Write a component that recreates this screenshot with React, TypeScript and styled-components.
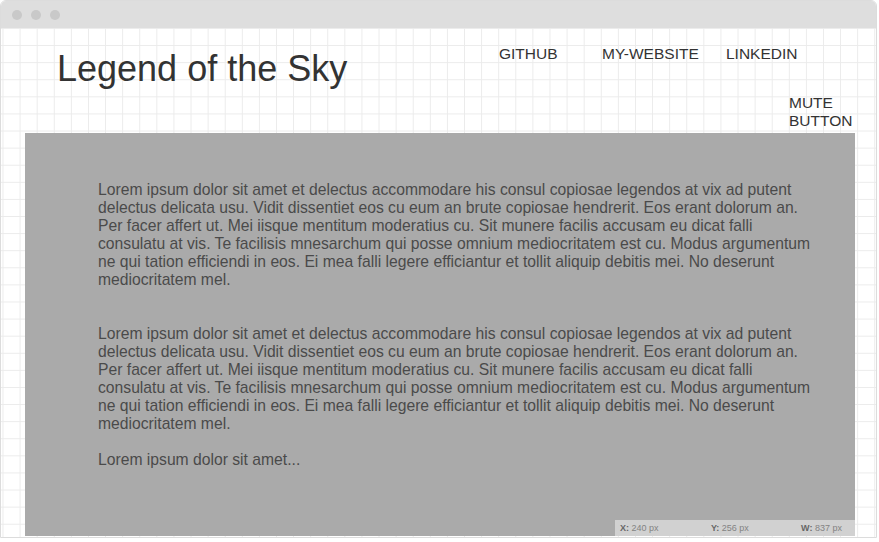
import React from 'react'
import styled, { createGlobalStyle } from 'styled-components'

const GlobalStyle = createGlobalStyle`
    html, body {
        margin: 0;
        padding: 0;
        background: #fff;
        font-family: "Liberation Sans", Arial, sans-serif;
    }
`

const lorem =
    'Lorem ipsum dolor sit amet et delectus accommodare his consul copiosae legendos at vix ad putent delectus delicata usu. Vidit dissentiet eos cu eum an brute copiosae hendrerit. Eos erant dolorum an. Per facer affert ut. Mei iisque mentitum moderatius cu. Sit munere facilis accusam eu dicat falli consulatu at vis. Te facilisis mnesarchum qui posse omnium mediocritatem est cu. Modus argumentum ne qui tation efficiendi in eos. Ei mea falli legere efficiantur et tollit aliquip debitis mei. No deserunt mediocritatem mel.'

const links = [
    { label: 'GITHUB', width: 103 },
    { label: 'MY-WEBSITE', width: 124 },
    { label: 'LINKEDIN', width: 0 },
]

const stats = [
    { key: 'X:', value: '240 px' },
    { key: 'Y:', value: '256 px' },
    { key: 'W:', value: '837 px' },
]

const App: React.FC = () => {
    return (
        <>
            <GlobalStyle />
            <Window>
                <TitleBar>
                    <Dot />
                    <Dot />
                    <Dot />
                </TitleBar>
                <Canvas>
                    <Header>
                        <Title>Legend of the Sky</Title>
                        <Nav>
                            <Links>
                                {links.map((l) => (
                                    <NavLink key={l.label} $width={l.width}>{l.label}</NavLink>
                                ))}
                            </Links>
                            <MuteRow>
                                <MuteButton>MUTE BUTTON</MuteButton>
                            </MuteRow>
                        </Nav>
                    </Header>
                    <Panel>
                        <Text $gap={36}>{lorem}</Text>
                        <Text $gap={18}>{lorem}</Text>
                        <Text $gap={0}>Lorem ipsum dolor sit amet...</Text>
                        <StatusBar>
                            {stats.map((s) => (
                                <Stat key={s.key}>
                                    <b>{s.key}</b> {s.value}
                                </Stat>
                            ))}
                        </StatusBar>
                    </Panel>
                </Canvas>
            </Window>
        </>
    )
}

export default App

const Window = styled.div`
    width: 877px;
    height: 538px;
    box-sizing: border-box;
    border: 1px solid #dcdcdc;
    border-radius: 6px 6px 0 0;
    display: flex;
    flex-direction: column;
    overflow: hidden;
`

const TitleBar = styled.div`
    height: 27px;
    flex-shrink: 0;
    background: #dedede;
    display: flex;
    align-items: center;
    gap: 9px;
    padding-left: 11px;
`

const Dot = styled.span`
    width: 10px;
    height: 10px;
    border-radius: 50%;
    background: #c9c9c9;
`

const Canvas = styled.div`
    flex: 1;
    background-color: #fff;
    background-image:
        linear-gradient(to right, #ebebeb 1px, transparent 1px),
        linear-gradient(to bottom, #ebebeb 1px, transparent 1px);
    background-size: 17.1px 17.1px;
    background-position: 1.5px 0px;
    display: flex;
    flex-direction: column;
`

const Header = styled.div`
    height: 105px;
    display: flex;
    justify-content: space-between;
    padding-right: 21px;
`

const Title = styled.h1`
    margin: 20px 0 0 56px;
    font-size: 36px;
    font-weight: normal;
    line-height: 41px;
    color: #333;
`

const Nav = styled.nav`
    width: 356px;
    display: flex;
    flex-direction: column;
    padding-top: 17px;
`

const Links = styled.div`
    display: flex;
`

const NavLink = styled.span<{ $width: number }>`
    ${(p) => (p.$width ? `width: ${p.$width}px;` : '')}
    font-size: 15.5px;
    line-height: 18px;
    color: #333;
`

const MuteRow = styled.div`
    display: flex;
    justify-content: flex-end;
    margin-top: 31px;
`

const MuteButton = styled.span`
    width: 66px;
    font-size: 15.5px;
    line-height: 18px;
    color: #333;
`

const Panel = styled.div`
    position: relative;
    margin-left: 24px;
    width: 830px;
    height: 403px;
    box-sizing: border-box;
    background: #aaaaaa;
    padding: 48px 0 0 73px;
`

const Text = styled.p<{ $gap: number }>`
    margin: 0 0 ${(p) => p.$gap}px;
    max-width: 725px;
    font-size: 15.7px;
    line-height: 18px;
    color: #4a4a4a;
`

const StatusBar = styled.div`
    position: absolute;
    right: 0;
    bottom: 0;
    width: 240px;
    height: 16px;
    box-sizing: border-box;
    padding: 0 13px 0 5px;
    background: #d1d1d1;
    display: flex;
    justify-content: space-between;
    align-items: center;
`

const Stat = styled.span`
    font-size: 9px;
    color: #838383;

    b {
        color: #666;
    }
`
